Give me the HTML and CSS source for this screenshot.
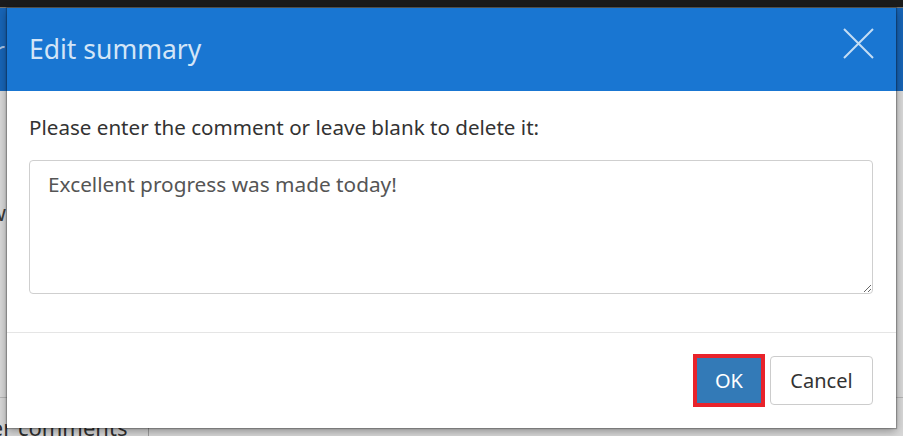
FILE: index.html
```html
<!DOCTYPE html>
<html lang="en">
<head>
<meta charset="utf-8">
<title>Edit summary</title>
<link rel="stylesheet" href="styles.css">
</head>
<body>
<div class="page">
  <div class="topbar"></div>
  <div class="page-header">
    <div class="page-header-clip"><span class="page-title">Tutor</span></div>
  </div>
  <div class="page-content">
    <div class="page-row"><div class="row-clip"><span class="row-label">Overview</span></div></div>
    <div class="comments-row">
      <div class="comments-label">Other comments</div>
      <div class="comments-value"></div>
    </div>
  </div>
</div>

<div class="modal" role="dialog" aria-labelledby="modal-title">
  <div class="modal-header">
    <h4 class="modal-title" id="modal-title">Edit summary</h4>
    <button class="close" type="button" aria-label="Close">
      <svg width="31" height="31" viewBox="0 0 31 31" aria-hidden="true">
        <path d="M1 1 L30 30 M30 1 L1 30" stroke="currentColor" stroke-width="2" fill="none"/>
      </svg>
    </button>
  </div>
  <div class="modal-body">
    <p class="prompt">Please enter the comment or leave blank to delete it:</p>
    <textarea class="comment">Excellent progress was made today!</textarea>
  </div>
  <div class="modal-footer">
    <span class="highlight"><button class="btn btn-primary" type="button">OK</button></span>
    <button class="btn btn-default" type="button">Cancel</button>
  </div>
</div>
</body>
</html>
```

FILE: styles.css
```css
html, body {
  margin: 0;
  padding: 0;
  height: 100%;
  overflow: hidden;
}

body {
  font-family: "Noto Sans", "Open Sans", "DejaVu Sans", sans-serif;
  background: #d8d8d8;
  position: relative;
}

.page {
  display: flex;
  flex-direction: column;
  height: 436px;
}

.topbar {
  height: 7px;
  background: #1b1b1b;
  border-bottom: 1px solid #77736c;
}

.page-header {
  height: 83px;
  background: #1764b6;
  display: flex;
  align-items: center;
}

.page-header-clip {
  width: 5px;
  display: flex;
  justify-content: flex-end;
  overflow: hidden;
  white-space: nowrap;
}

.page-title {
  font-size: 26px;
  color: #a9c3e3;
}

.page-content {
  flex: 1;
  display: flex;
  flex-direction: column;
  justify-content: space-between;
  background: #d8d8d8;
}

.page-row {
  padding: 106px 0 170px 0;
  border-bottom: 1px solid #b5b5b5;
}

.row-clip {
  width: 6px;
  display: flex;
  justify-content: flex-end;
  overflow: hidden;
  white-space: nowrap;
}

.row-label {
  font-size: 22px;
  color: #3a3a3a;
}

.comments-row {
  display: flex;
  height: 30px;
}

.comments-label {
  width: 197px;
  margin-left: -48px;
  box-sizing: border-box;
  padding-top: 6px;
  font-size: 22px;
  color: #2f2f2f;
  border-right: 1px solid #9e9e9e;
  white-space: nowrap;
  overflow: hidden;
}

.comments-value {
  flex: 1;
}

/* Modal */
.modal {
  position: absolute;
  left: 7px;
  top: 8px;
  width: 889px;
  height: 420px;
  background: #fff;
  display: flex;
  flex-direction: column;
  box-shadow: 0 0 1px 1px rgba(0, 0, 0, 0.25), 0 3px 9px rgba(0, 0, 0, 0.35);
}

.modal-header {
  height: 83px;
  flex: none;
  box-sizing: border-box;
  background: #1976d2;
  padding: 0 22px;
  display: flex;
  align-items: center;
  justify-content: space-between;
}

.modal-title {
  margin: 0;
  font-size: 26.5px;
  font-weight: 400;
  color: #d3e5f7;
  line-height: 1.2;
}

.close {
  margin: 0 0 13px 0;
  padding: 0;
  border: 0;
  background: transparent;
  color: #c4ddf4;
  width: 31px;
  height: 31px;
  display: flex;
}

.modal-body {
  padding: 22px 23px 38px 22px;
  flex: none;
}

.prompt {
  margin: 0 0 19px 0;
  font-size: 20.6px;
  line-height: 28px;
  color: #333;
}

.comment {
  display: block;
  box-sizing: border-box;
  width: 100%;
  height: 134px;
  margin: 0;
  padding: 9px 18px;
  font-family: inherit;
  font-size: 20.8px;
  line-height: 28px;
  color: #555;
  border: 1px solid #cfcfcf;
  border-radius: 4px;
  background: #fff;
  outline: none;
}

.modal-footer {
  flex: 1;
  border-top: 1px solid #e5e5e5;
  padding: 0 23px 0 22px;
  display: flex;
  align-items: center;
  justify-content: flex-end;
  gap: 5px;
}

.highlight {
  display: flex;
  border: 4px solid #e8232b;
}

.btn {
  font-family: inherit;
  font-size: 20px;
  line-height: 1;
  margin: 0;
  cursor: pointer;
}

.btn-primary {
  width: 64px;
  height: 45px;
  border: 0;
  background: #337ab7;
  color: #fff;
}

.btn-default {
  width: 103px;
  height: 49px;
  border: 1px solid #cccccc;
  border-radius: 4px;
  background: #fff;
  color: #333;
}
```
